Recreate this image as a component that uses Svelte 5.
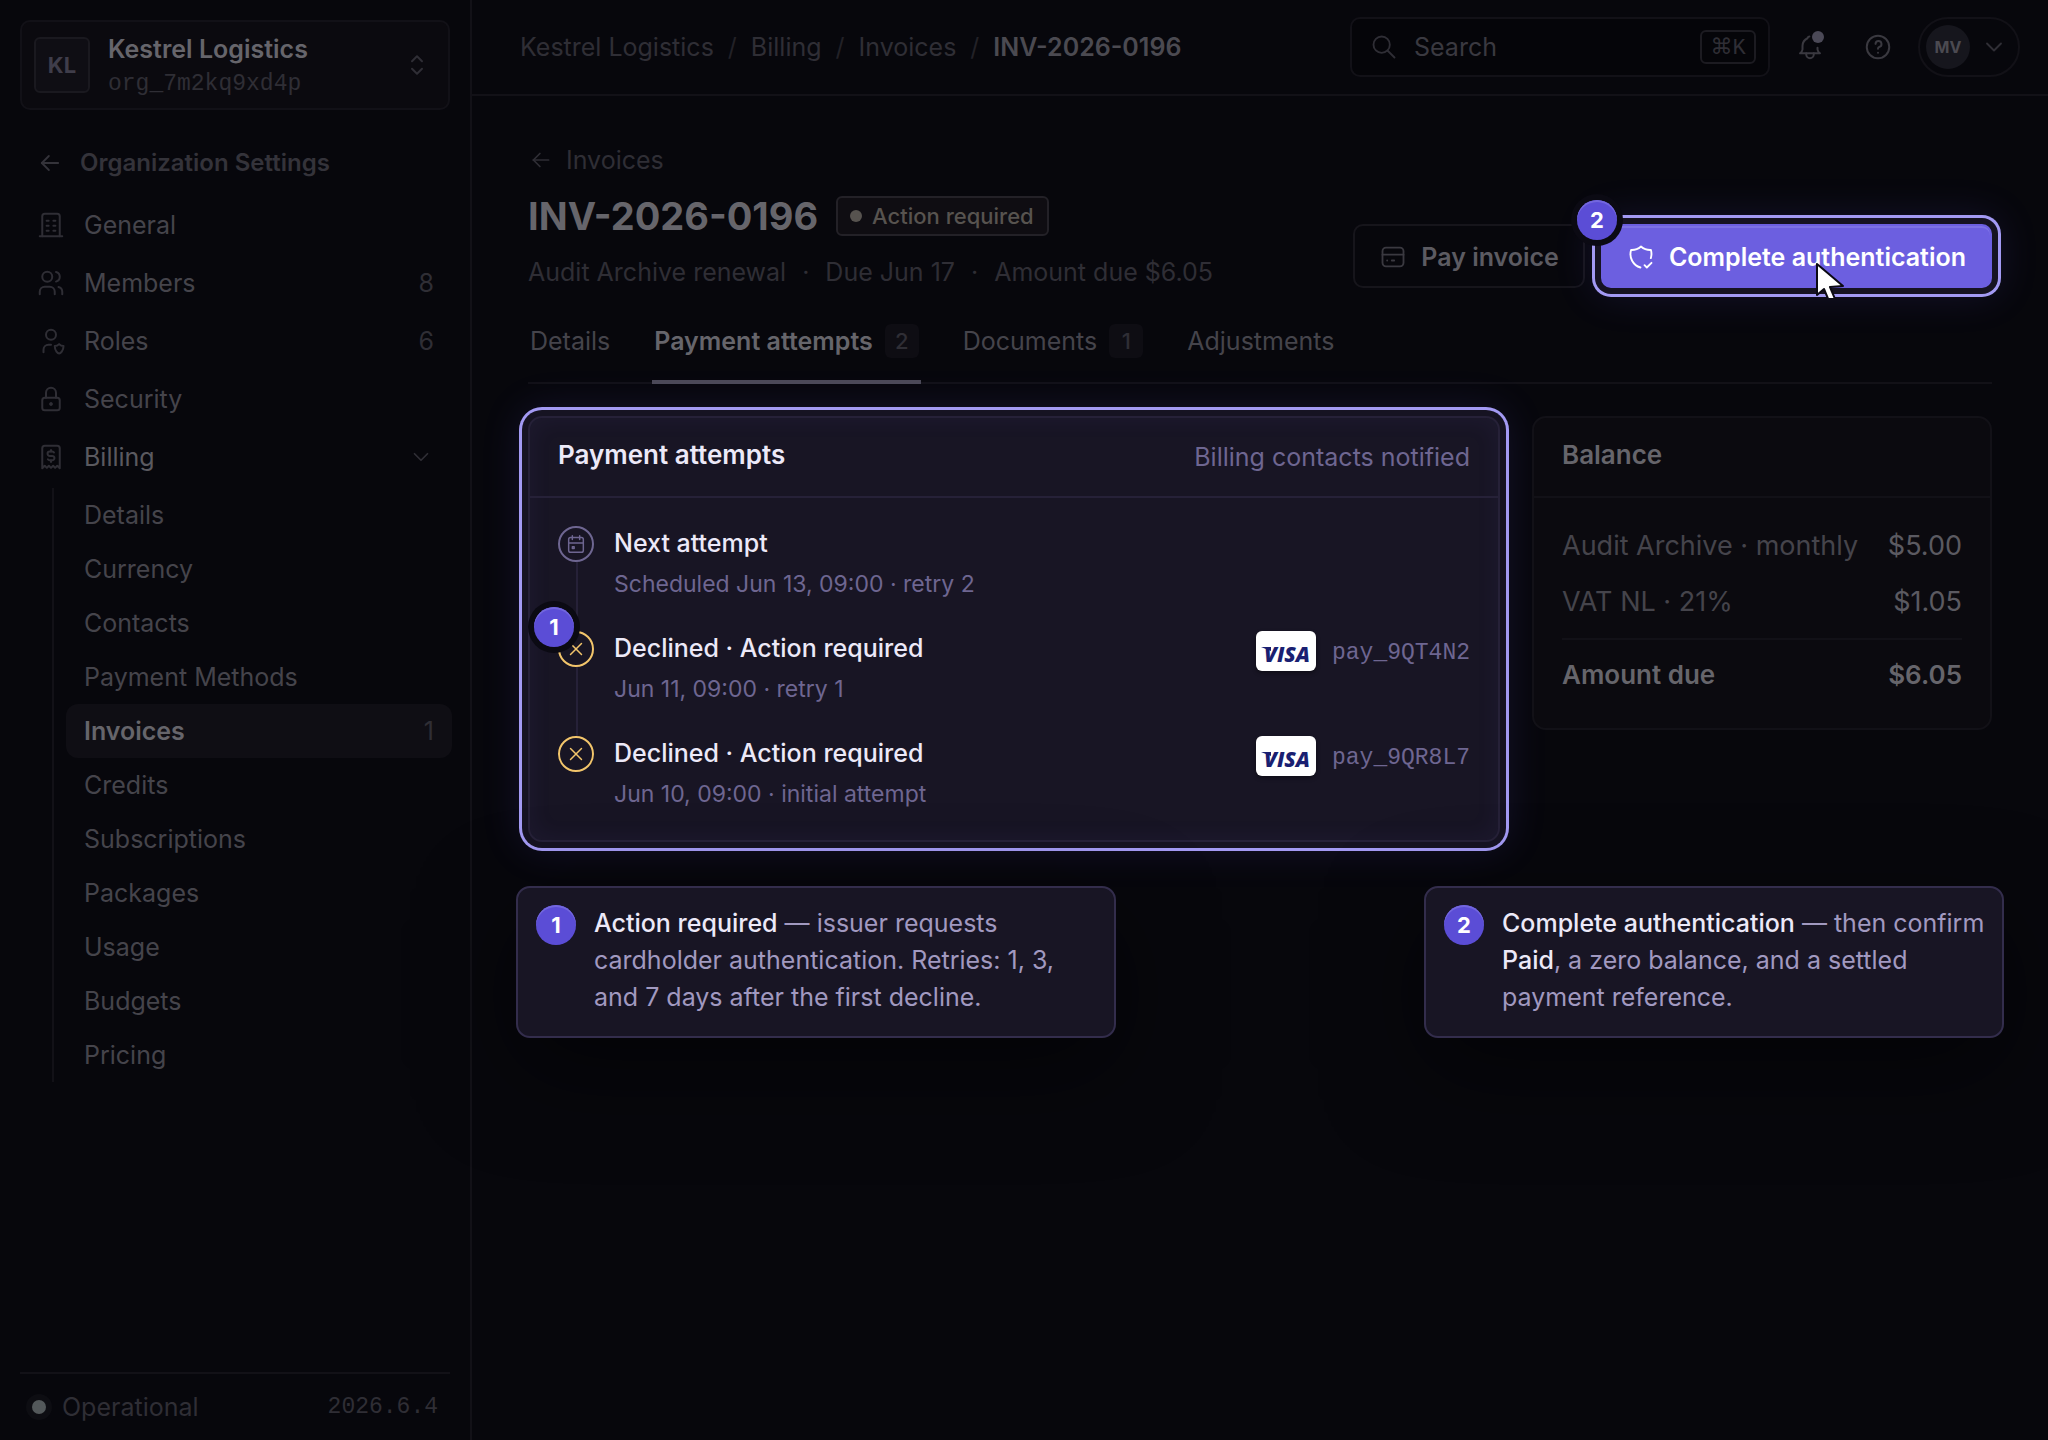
<script>
  const nav = [
    { label: 'General', icon: 'building' },
    { label: 'Members', icon: 'users', count: 8 },
    { label: 'Roles', icon: 'roles', count: 6 },
    { label: 'Security', icon: 'lock' },
    { label: 'Billing', icon: 'receipt', open: true }
  ];

  const billing = [
    { label: 'Details' },
    { label: 'Currency' },
    { label: 'Contacts' },
    { label: 'Payment Methods' },
    { label: 'Invoices', count: 1, active: true },
    { label: 'Credits' },
    { label: 'Subscriptions' },
    { label: 'Packages' },
    { label: 'Usage' },
    { label: 'Budgets' },
    { label: 'Pricing' }
  ];

  const crumbs = ['Kestrel Logistics', 'Billing', 'Invoices'];

  const tabs = [
    { label: 'Details' },
    { label: 'Payment attempts', count: 2, active: true },
    { label: 'Documents', count: 1 },
    { label: 'Adjustments' }
  ];

  const attempts = [
    { title: 'Next attempt', meta: 'Scheduled Jun 13, 09:00 · retry 2', icon: 'calendar' },
    { title: 'Declined · Action required', meta: 'Jun 11, 09:00 · retry 1', icon: 'x', ref: 'pay_9QT4N2', note: 1 },
    { title: 'Declined · Action required', meta: 'Jun 10, 09:00 · initial attempt', icon: 'x', ref: 'pay_9QR8L7' }
  ];

  const icons = {
    building: ['M3 21h18', 'M5 21V5a2 2 0 0 1 2-2h10a2 2 0 0 1 2 2v16', 'M8.5 8.5h1.6M13.9 8.5h1.6M8.5 12.5h1.6M13.9 12.5h1.6M8.5 16.5h1.6M13.9 16.5h1.6'],
    users: ['M5 7a4 4 0 1 0 8 0a4 4 0 1 0-8 0', 'M3 21v-2a4 4 0 0 1 4-4h4a4 4 0 0 1 4 4v2', 'M16 3.13a4 4 0 0 1 0 7.75', 'M21 21v-2a4 4 0 0 0-3-3.85'],
    roles: ['M8 7a4 4 0 1 0 8 0a4 4 0 1 0-8 0', 'M6 21v-2a4 4 0 0 1 4-4h2', 'M22 16c0 4-2.5 6-3.5 6S15 20 15 16c1 0 2.5-.5 3.5-1.5c1 1 2.5 1.5 3.5 1.5z'],
    lock: ['M5 13a2 2 0 0 1 2-2h10a2 2 0 0 1 2 2v6a2 2 0 0 1-2 2H7a2 2 0 0 1-2-2z', 'M11.3 16a.7.7 0 1 0 1.4 0a.7.7 0 1 0-1.4 0', 'M8 11V7a4 4 0 0 1 8 0v4'],
    receipt: ['M5 21V5a2 2 0 0 1 2-2h10a2 2 0 0 1 2 2v16l-2-2-1.7 1.7L13.7 19 12 20.7 10.3 19l-1.6 1.7L7 19z', 'M14.4 8.4A1.7 1.7 0 0 0 13 7.6h-2a1.7 1.7 0 1 0 0 3.5h2a1.7 1.7 0 1 1 0 3.5h-2a1.7 1.7 0 0 1-1.5-.8', 'M12 6.3v1.2M12 14.7v1.2'],
    arrow: ['M5 12h14', 'M5 12l6 6', 'M5 12l6-6'],
    selector: ['M8 9l4-4 4 4', 'M16 15l-4 4-4-4'],
    chevron: ['M6 9l6 6 6-6'],
    search: ['M3 10a7 7 0 1 0 14 0a7 7 0 1 0-14 0', 'M21 21l-6-6'],
    bell: ['M11.5 3.6A2 2 0 0 0 10 5a7 7 0 0 0-4 6v3a4 4 0 0 1-2 3h16a4 4 0 0 1-2-3v-1.5', 'M9 17v1a3 3 0 0 0 6 0v-1'],
    help: ['M3 12a9 9 0 1 0 18 0a9 9 0 1 0-18 0', 'M12 16.6v.01', 'M12 13.4a1.5 1.5 0 0 1 1-1.4a2.4 2.4 0 1 0-3-2.5'],
    card: ['M3 7a3 3 0 0 1 3-3h12a3 3 0 0 1 3 3v10a3 3 0 0 1-3 3H6a3 3 0 0 1-3-3z', 'M3 10h18', 'M7 15h.01', 'M11 15h2'],
    shield: ['M11.5 21a12 12 0 0 1-8-15A12 12 0 0 0 12 3a12 12 0 0 0 8.5 3a12 12 0 0 1-.1 7', 'M15 19l2 2 4-4'],
    calendar: ['M4 7a2 2 0 0 1 2-2h12a2 2 0 0 1 2 2v12a2 2 0 0 1-2 2H6a2 2 0 0 1-2-2z', 'M16 3v4M8 3v4M4 11h16', 'M8 15h2v2H8z'],
    x: ['M18 6L6 18', 'M6 6l12 12']
  };
</script>

{#snippet icon(name, cls = '')}
  <svg class="icon {cls}" viewBox="0 0 24 24" aria-hidden="true">
    {#each icons[name] as d}<path {d} />{/each}
  </svg>
{/snippet}

<div class="app">
  <aside class="sidebar">
    <button class="org" type="button">
      <span class="org-logo">KL</span>
      <span class="org-text">
        <span class="org-name">Kestrel Logistics</span>
        <span class="org-id mono">org_7m2kq9xd4p</span>
      </span>
      {@render icon('selector', 'nav-size')}
    </button>

    <a class="settings" href="#settings">{@render icon('arrow')}Organization Settings</a>

    <nav aria-label="Organization settings">
      <ul class="nav">
        {#each nav as item}
          <li>
            <a href="#{item.icon}" class="nav-item" class:open={item.open}>
              {@render icon(item.icon, 'nav-size')}
              <span class="grow">{item.label}</span>
              {#if item.count}<span class="count">{item.count}</span>{/if}
              {#if item.open}{@render icon('chevron', 'small')}{/if}
            </a>
          </li>
        {/each}
      </ul>
      <ul class="subnav">
        {#each billing as item}
          <li>
            <a href="#billing" class="sub-item" class:active={item.active}>
              <span class="grow">{item.label}</span>
              {#if item.count}<span class="count">{item.count}</span>{/if}
            </a>
          </li>
        {/each}
      </ul>
    </nav>

    <footer class="status">
      <span class="status-dot"></span>
      <span class="grow">Operational</span>
      <span class="mono">2026.6.4</span>
    </footer>
  </aside>

  <div class="page">
    <header class="topbar">
      <nav class="crumbs" aria-label="Breadcrumb">
        {#each crumbs as crumb}
          <a href="#crumb">{crumb}</a><span class="slash">/</span>
        {/each}
        <span class="here">INV-2026-0196</span>
      </nav>
      <label class="search">
        {@render icon('search')}
        <input type="search" placeholder="Search" aria-label="Search" />
        <kbd>⌘K</kbd>
      </label>
      <button class="tool bell" type="button" aria-label="Notifications">{@render icon('bell', 'tool-size')}</button>
      <button class="tool" type="button" aria-label="Help">{@render icon('help', 'tool-size')}</button>
      <button class="account" type="button" aria-label="Account">
        <span class="avatar">MV</span>
        {@render icon('chevron')}
      </button>
    </header>

    <main>
      <div class="head">
        <div class="head-text">
          <a class="back" href="#invoices">{@render icon('arrow', 'small')}Invoices</a>
          <div class="title">
            <h1>INV-2026-0196</h1>
            <span class="state"><i></i>Action required</span>
          </div>
          <p class="facts">
            <span>Audit Archive renewal</span><span>·</span><span>Due Jun 17</span><span>·</span><span>Amount due $6.05</span>
          </p>
        </div>
        <div class="actions">
          <button class="btn" type="button">{@render icon('card')}Pay invoice</button>
          <button class="btn primary ring" type="button">
            {@render icon('shield')}Complete authentication
            <span class="note pinned">2</span>
            <svg class="pointer" viewBox="0 0 30 36" aria-hidden="true">
              <path d="M2 2v31l7-6 5 12 6-2-5-12 13-1z" />
            </svg>
          </button>
        </div>
      </div>

      <div class="tabs" role="tablist">
        {#each tabs as tab}
          <button class="tab" class:active={tab.active} type="button" role="tab" aria-selected={!!tab.active}>
            {tab.label}
            {#if tab.count}<span class="pill">{tab.count}</span>{/if}
          </button>
        {/each}
      </div>

      <div class="cards">
        <section class="card lit ring">
          <header class="card-head">
            <h2>Payment attempts</h2>
            <span>Billing contacts notified</span>
          </header>
          <ol class="timeline">
            {#each attempts as a}
              <li class="attempt">
                <span class="marker" class:declined={a.icon === 'x'}>
                  {@render icon(a.icon, 'tiny')}
                  {#if a.note}<span class="note pinned">{a.note}</span>{/if}
                </span>
                <div class="grow">
                  <h3>{a.title}</h3>
                  <p>{a.meta}</p>
                </div>
                {#if a.ref}
                  <div class="payref">
                    <span class="visa">VISA</span>
                    <span class="mono">{a.ref}</span>
                  </div>
                {/if}
              </li>
            {/each}
          </ol>
        </section>

        <section class="card balance">
          <header class="card-head"><h2>Balance</h2></header>
          <dl>
            <div><dt>Audit Archive · monthly</dt><dd>$5.00</dd></div>
            <div><dt>VAT NL · 21%</dt><dd>$1.05</dd></div>
            <div class="total"><dt>Amount due</dt><dd>$6.05</dd></div>
          </dl>
        </section>
      </div>

      <div class="callouts">
        <aside class="callout first">
          <span class="note">1</span>
          <p><strong>Action required</strong> — issuer requests cardholder authentication. Retries: 1, 3, and 7 days after the first decline.</p>
        </aside>
        <aside class="callout">
          <span class="note">2</span>
          <p><strong>Complete authentication</strong> — then confirm <strong>Paid</strong>, a zero balance, and a settled payment reference.</p>
        </aside>
      </div>
    </main>
  </div>
</div>

<style>
  :global(body) {
    background: #07070c;
  }

  .app {
    --line: #121117;
    --faint: #2f2e35;
    --soft: #45444b;
    --bright: #66656b;
    display: grid;
    grid-template-columns: 472px minmax(0, 1fr);
    min-height: 100vh;
    color: var(--soft);
    font: 400 25px/32px Inter, sans-serif;
  }

  .app :global(*) {
    box-sizing: border-box;
  }

  a {
    color: inherit;
    text-decoration: none;
  }

  button {
    margin: 0;
    padding: 0;
    border: 0;
    background: none;
    color: inherit;
    font: inherit;
    text-align: left;
    cursor: pointer;
  }

  h1, h2, h3, p, ul, ol, dl, dd {
    margin: 0;
    padding: 0;
    list-style: none;
  }

  .mono {
    font-family: 'Liberation Mono', monospace;
    font-size: 23px;
  }

  .grow {
    flex: 1;
    min-width: 0;
  }

  .icon {
    flex: none;
    width: 28px;
    height: 28px;
    fill: none;
    stroke: currentColor;
    stroke-width: 1.6;
    stroke-linecap: round;
    stroke-linejoin: round;
  }

  .icon.nav-size, .icon.tool-size { width: 30px; height: 30px; }
  .icon.small { width: 26px; height: 26px; }
  .icon.tiny { width: 22px; height: 22px; }

  /* Sidebar */
  .sidebar {
    display: flex;
    flex-direction: column;
    padding: 20px 20px 12px;
    border-right: 2px solid var(--line);
  }

  .org {
    display: flex;
    align-items: center;
    gap: 18px;
    height: 90px;
    padding: 0 16px 0 12px;
    border: 2px solid var(--line);
    border-radius: 10px;
    background: #0b0a0f;
    color: var(--faint);
  }

  .org-logo {
    display: grid;
    place-items: center;
    width: 56px;
    height: 56px;
    border: 2px solid #1a191f;
    border-radius: 6px;
    background: #0f0e14;
    color: #3f3d4a;
    font-size: 22px;
    font-weight: 700;
  }

  .org-text {
    display: grid;
    flex: 1;
    gap: 3px;
    padding-top: 3px;
  }

  .org-name {
    color: var(--bright);
    font-weight: 600;
  }

  .settings {
    display: flex;
    align-items: center;
    gap: 16px;
    margin: 37px 16px 17px;
    color: #34333a;
    font-size: 24px;
    font-weight: 600;
  }

  .nav-item {
    display: flex;
    align-items: center;
    gap: 18px;
    height: 58px;
    padding: 0 16px;
  }

  .nav-item .icon { color: var(--faint); }
  .nav-item.open { color: #5a595f; }
  .count { color: var(--faint); }

  .subnav {
    margin: 2px -2px 0 32px;
    border-left: 2px solid var(--line);
  }

  .sub-item {
    display: flex;
    align-items: center;
    height: 54px;
    margin-left: 12px;
    padding: 0 18px;
  }

  .sub-item.active {
    border-radius: 12px;
    background: #0f0e14;
    color: var(--bright);
    font-weight: 600;
  }

  .sub-item .count { font-weight: 400; }

  .status {
    display: flex;
    align-items: center;
    gap: 16px;
    height: 56px;
    margin-top: auto;
    padding: 12px 12px 0;
    border-top: 2px solid var(--line);
    color: var(--faint);
  }

  .status-dot {
    width: 14px;
    height: 14px;
    border-radius: 50%;
    background: #53585a;
    box-shadow: 0 0 0 6px #0d0d12;
  }

  /* Top bar */
  .topbar {
    display: flex;
    align-items: center;
    height: 96px;
    padding: 0 28px 0 48px;
    border-bottom: 2px solid var(--line);
    color: var(--faint);
  }

  .crumbs {
    display: flex;
    gap: 14px;
    margin-right: auto;
  }

  .slash { color: #222127; }

  .here {
    color: #4b4a51;
    font-weight: 600;
  }

  .search {
    display: flex;
    align-items: center;
    gap: 16px;
    width: 420px;
    height: 60px;
    padding: 0 12px 0 18px;
    border: 2px solid var(--line);
    border-radius: 10px;
    background: #050509;
  }

  .search input {
    flex: 1;
    min-width: 0;
    padding: 0;
    border: 0;
    outline: 0;
    background: none;
    color: inherit;
    font: inherit;
  }

  .search input::placeholder {
    color: #3a3940;
    opacity: 1;
  }

  kbd {
    display: grid;
    place-items: center;
    width: 56px;
    height: 34px;
    border: 2px solid #1c1b21;
    border-radius: 6px;
    font: 22px 'Liberation Mono', 'DejaVu Sans', monospace;
  }

  .tool {
    display: grid;
    place-items: center;
    width: 30px;
    height: 30px;
    margin-left: 25px;
  }

  .tool + .tool { margin-left: 38px; }

  .tool .icon { color: #3a3940; }

  .bell { position: relative; }

  .bell::after {
    content: '';
    position: absolute;
    top: -1px;
    right: 1px;
    width: 12px;
    height: 12px;
    border-radius: 50%;
    background: #4b4957;
  }

  .account {
    display: flex;
    align-items: center;
    gap: 10px;
    height: 60px;
    margin-left: 25px;
    padding: 0 10px 0 6px;
    border: 2px solid var(--line);
    border-radius: 30px;
  }

  .avatar {
    display: grid;
    place-items: center;
    width: 44px;
    height: 44px;
    border-radius: 50%;
    background: #16161d;
    color: #4b4a51;
    font-size: 16px;
    font-weight: 700;
  }

  /* Invoice header */
  main { padding: 48px 56px; }

  .head {
    display: flex;
    align-items: flex-end;
    justify-content: space-between;
  }

  .head-text {
    display: grid;
    gap: 16px;
  }

  .back {
    display: flex;
    align-items: center;
    gap: 12px;
    color: var(--faint);
  }

  .title {
    display: flex;
    align-items: center;
    gap: 18px;
  }

  h1 {
    color: var(--bright);
    font-size: 38px;
    line-height: 48px;
    font-weight: 700;
  }

  .state {
    display: flex;
    align-items: center;
    gap: 10px;
    height: 40px;
    padding: 0 13px 0 12px;
    border: 2px solid #232127;
    border-radius: 6px;
    background: #0f0d12;
    color: #57534f;
    font-size: 22px;
    font-weight: 500;
  }

  .state i {
    width: 12px;
    height: 12px;
    border-radius: 50%;
    background: #57534f;
  }

  .facts {
    display: flex;
    gap: 16px;
    color: var(--faint);
  }

  .actions {
    display: flex;
    gap: 16px;
  }

  .btn {
    display: flex;
    align-items: center;
    gap: 14px;
    height: 64px;
    padding: 2px 24px 0;
    border: 2px solid #16151b;
    border-radius: 10px;
    color: #5c5b62;
    font-weight: 600;
  }

  .btn .icon { color: #3a3940; }

  .btn.primary {
    position: relative;
    border-color: #6c5fe0;
    background: #6c5fe0;
    color: #fff;
  }

  .btn.primary .icon { color: #fff; }

  .ring {
    box-shadow:
      inset 0 2px 0 #7d71e6,
      0 0 0 6px #161322,
      0 0 0 9px #a39af3,
      0 0 40px 8px rgba(108, 95, 224, 0.14);
  }

  .note {
    display: grid;
    flex: none;
    place-items: center;
    width: 40px;
    height: 40px;
    border-radius: 50%;
    background: #5b4dd6;
    box-shadow: inset 0 2px 0 #7367de;
    color: #fff;
    font-size: 22px;
    line-height: 40px;
    font-weight: 700;
  }

  .note.pinned {
    position: absolute;
    top: -26px;
    left: -26px;
    box-shadow: inset 0 2px 0 #7367de, 0 0 0 6px #0b0a13;
  }

  .pointer {
    position: absolute;
    top: 36px;
    left: 212px;
    width: 30px;
    height: 36px;
    overflow: hidden;
    fill: #fff;
    stroke: #0b0a13;
    stroke-width: 2;
    stroke-linejoin: round;
  }

  /* Tabs */
  .tabs {
    display: flex;
    gap: 40px;
    height: 76px;
    margin-top: 20px;
    box-shadow: inset 0 -2px 0 var(--line);
  }

  .tab {
    display: flex;
    align-items: center;
    gap: 12px;
    padding: 0 2px 10px;
  }

  .tab.active {
    box-shadow: inset 0 -4px 0 #4b4957;
    color: var(--bright);
    font-weight: 600;
  }

  .pill {
    display: grid;
    place-items: center;
    width: 34px;
    height: 34px;
    border-radius: 6px;
    background: #0e0d13;
    color: var(--faint);
    font-size: 22px;
    font-weight: 500;
  }

  /* Cards */
  .cards {
    display: grid;
    grid-template-columns: minmax(0, 1fr) 460px;
    gap: 32px;
    align-items: start;
    margin-top: 32px;
  }

  .card {
    border: 2px solid var(--line);
    border-radius: 14px;
    background: #0b0a0f;
  }

  .card-head {
    display: flex;
    align-items: center;
    justify-content: space-between;
    height: 80px;
    padding: 0 28px 4px;
    border-bottom: 2px solid var(--line);
  }

  h2 {
    color: var(--bright);
    font-size: 26px;
    font-weight: 600;
  }

  .card.lit {
    border-color: #262138;
    background: #181524;
    color: #6e6691;
  }

  .card.ring {
    box-shadow:
      inset 0 0 24px rgba(108, 95, 224, 0.07),
      0 0 0 6px #161322,
      0 0 0 9px #a39af3,
      0 0 40px 8px rgba(108, 95, 224, 0.14);
  }

  .lit .card-head { border-color: #262138; }
  .lit h2, .lit h3 { color: #ece9f8; }
  .lit .card-head span { padding-top: 4px; }

  .timeline { padding: 28px; }

  .attempt {
    display: flex;
    gap: 20px;
    position: relative;
    height: 105px;
  }

  .attempt:last-child { height: 76px; }

  .attempt:not(:last-child)::before {
    content: '';
    position: absolute;
    top: 34px;
    bottom: 0;
    left: 18px;
    width: 2px;
    background: #262138;
  }

  .marker {
    display: grid;
    flex: none;
    place-items: center;
    position: relative;
    width: 36px;
    height: 36px;
    border: 2px solid #6e6691;
    border-radius: 50%;
  }

  .marker.declined {
    border-color: #f2c56b;
    color: #f2c56b;
  }

  h3 {
    font-size: 25px;
    line-height: 34px;
    font-weight: 500;
  }

  .attempt p {
    margin-top: 8px;
    font-size: 23px;
  }

  .payref {
    display: flex;
    align-items: center;
    gap: 16px;
    height: 40px;
  }

  .payref .mono { padding-top: 4px; }

  .visa {
    display: grid;
    place-items: center;
    position: relative;
    width: 60px;
    height: 40px;
    padding: 6px 0 0 2px;
    border-radius: 6px;
    background: #fff;
    box-shadow: 0 2px 4px rgba(0, 0, 0, 0.4);
    color: #1a1f71;
    font: italic 800 21px/34px 'Open Sans', sans-serif;
  }

  /* Swash at the upper left of the wordmark */
  .visa::before {
    content: '';
    position: absolute;
    top: 16px;
    left: 5px;
    width: 10px;
    height: 4px;
    background: #1a1f71;
    clip-path: polygon(0 0, 100% 0, 100% 100%);
  }

  .balance dl {
    padding: 20px 28px 18px;
    font-size: 27px;
  }

  .balance dl div {
    display: flex;
    align-items: center;
    justify-content: space-between;
    height: 56px;
  }

  .balance dd { color: #5b5a61; }

  .balance dl .total {
    height: 72px;
    margin-top: 8px;
    border-top: 2px solid var(--line);
    color: var(--bright);
    font-size: 26px;
    font-weight: 600;
  }

  .balance .total dd { color: inherit; }

  /* Callouts */
  .callouts {
    display: flex;
    align-items: flex-start;
    justify-content: space-between;
    gap: 32px;
    margin: 44px -12px 0;
  }

  .callout {
    display: flex;
    gap: 18px;
    width: 580px;
    padding: 17px 12px 20px 18px;
    border: 2px solid #332d4c;
    border-radius: 14px;
    background: #181524;
    box-shadow: 0 32px 96px rgba(0, 0, 0, 0.5);
    color: #a199c0;
    line-height: 37px;
  }

  .callout.first { width: 600px; }

  .callout strong {
    color: #ece9f8;
    font-weight: 500;
  }
</style>
